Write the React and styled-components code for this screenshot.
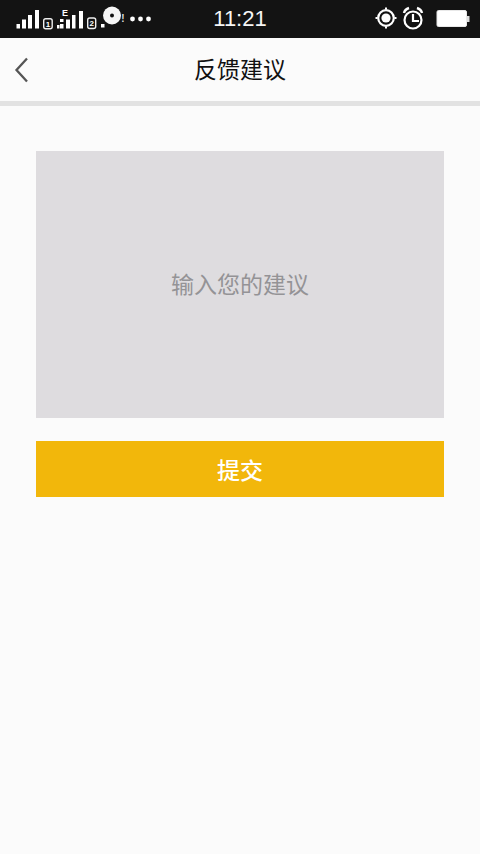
import React from 'react';
import styled, { createGlobalStyle } from 'styled-components';

const GlobalStyle = createGlobalStyle`
  html, body {
    margin: 0;
    padding: 0;
    background: #fbfbfb;
  }
  * {
    box-sizing: border-box;
  }
`;

const Page = styled.div`
  width: 480px;
  height: 854px;
  overflow: hidden;
  background: #fbfbfb;
  font-family: "Noto Sans CJK SC", "Noto Sans", sans-serif;
`;

const StatusBar = styled.div`
  height: 38px;
  background: #131313;
  display: grid;
  grid-template-columns: 1fr auto 1fr;
  align-items: center;
  color: #fff;

  svg {
    display: block;
  }
`;

const StatusRight = styled.div`
  display: flex;
  justify-content: flex-end;
`;

const Clock = styled.span`
  font-family: "Liberation Sans", Arial, sans-serif;
  font-size: 22px;
  line-height: 38px;
  color: #f6f6f6;
`;

const NavBar = styled.header`
  height: 68px;
  display: grid;
  grid-template-columns: 1fr auto 1fr;
  align-items: center;
  padding-left: 14px;
  padding-right: 14px;
  border-bottom: 5px solid #e2e2e2;
`;

const BackButton = styled.button`
  justify-self: start;
  width: 16px;
  height: 28px;
  padding: 0;
  border: none;
  background: none;
  display: block;

  svg {
    display: block;
  }
`;

const Title = styled.h1`
  margin: 0;
  padding-bottom: 4px;
  font-size: 23px;
  font-weight: 400;
  line-height: 30px;
  color: #111;
`;

const Form = styled.main`
  padding: 45px 36px 0;
  display: flex;
  flex-direction: column;
  gap: 23px;
`;

const Suggestion = styled.div`
  height: 267px;
  padding-bottom: 4px;
  background: #dedcdf;
  color: #949396;
  font-size: 23px;
  display: flex;
  align-items: center;
  justify-content: center;
`;

const Submit = styled.button`
  height: 56px;
  border: none;
  padding: 0;
  background: #f2b70b;
  color: #fff;
  font-family: inherit;
  font-size: 23px;
  font-weight: 500;
`;

const SignalIcons = () => (
  <svg width="160" height="38" viewBox="0 0 160 38" fill="#fff" fontFamily="Liberation Sans" fontWeight="700">
    <rect x="16.500" y="24" width="3.500" height="4.500" />
    <rect x="22" y="19.500" width="4" height="9" />
    <rect x="28" y="15" width="4" height="13.500" />
    <rect x="35" y="10" width="4" height="18.500" />
    <rect x="43.700" y="18.700" width="8.500" height="10" rx="2" fill="none" stroke="#eee" strokeWidth="1.400" />
    <text x="48" y="26.700" fontSize="8" textAnchor="middle">1</text>
    <text x="65" y="15.500" fontSize="9" textAnchor="middle">E</text>
    <rect x="57" y="25" width="2.500" height="3.500" />
    <rect x="60" y="24" width="3.500" height="4.500" />
    <rect x="60" y="19" width="3.500" height="3" />
    <rect x="66" y="19.500" width="4" height="9" />
    <rect x="72" y="15" width="3.500" height="13.500" />
    <rect x="79" y="11" width="4" height="17.500" />
    <rect x="87.700" y="18" width="8" height="10.500" rx="2" fill="none" stroke="#eee" strokeWidth="1.400" />
    <text x="91.700" y="26.300" fontSize="8" textAnchor="middle">2</text>
    <rect x="101" y="24" width="3.500" height="3.500" />
    <circle cx="112" cy="15.500" r="9" fill="#f6f6f6" />
    <circle cx="112" cy="15.500" r="2" fill="#131313" />
    <text x="123" y="22" fontSize="10" fill="#ddd" textAnchor="middle">!</text>
    <circle cx="132.500" cy="19" r="2.400" />
    <circle cx="140.500" cy="19" r="2.400" />
    <circle cx="148.500" cy="19" r="2.400" />
  </svg>
);

const SystemIcons = () => (
  <svg width="110" height="38" viewBox="370 0 110 38" fill="none" stroke="#fff">
    <circle cx="386" cy="18" r="7.800" strokeWidth="2.200" />
    <circle cx="386" cy="18" r="4.600" fill="#fff" stroke="none" />
    <path d="M386 7.500v2M386 26.500v2M375.500 18h2M394.500 18h2" strokeWidth="2" />
    <circle cx="413" cy="20" r="8.500" strokeWidth="2.200" />
    <path d="M413 14v7h6" strokeWidth="2.200" />
    <path d="M404 13c.5-2.500 2-4 5-5M422 13c-.5-2.500-2-4-5-5" strokeWidth="2.400" />
    <rect x="437" y="10.500" width="29.500" height="16" rx="1.500" fill="#fff" stroke="#e8e8e8" />
    <rect x="467" y="16" width="2.500" height="6" fill="#ddd" stroke="none" />
  </svg>
);

const BackIcon = () => (
  <svg width="16" height="28" viewBox="0 0 16 28" fill="none" stroke="#555" strokeWidth="2.300">
    <path d="M13 2.500 2.500 14 13 25.500" />
  </svg>
);

export default function App() {
  return (
    <Page>
      <GlobalStyle />
      <StatusBar>
        <SignalIcons />
        <Clock>11:21</Clock>
        <StatusRight>
          <SystemIcons />
        </StatusRight>
      </StatusBar>
      <NavBar>
        <BackButton aria-label="返回">
          <BackIcon />
        </BackButton>
        <Title>反馈建议</Title>
      </NavBar>
      <Form>
        <Suggestion>输入您的建议</Suggestion>
        <Submit>提交</Submit>
      </Form>
    </Page>
  );
}
